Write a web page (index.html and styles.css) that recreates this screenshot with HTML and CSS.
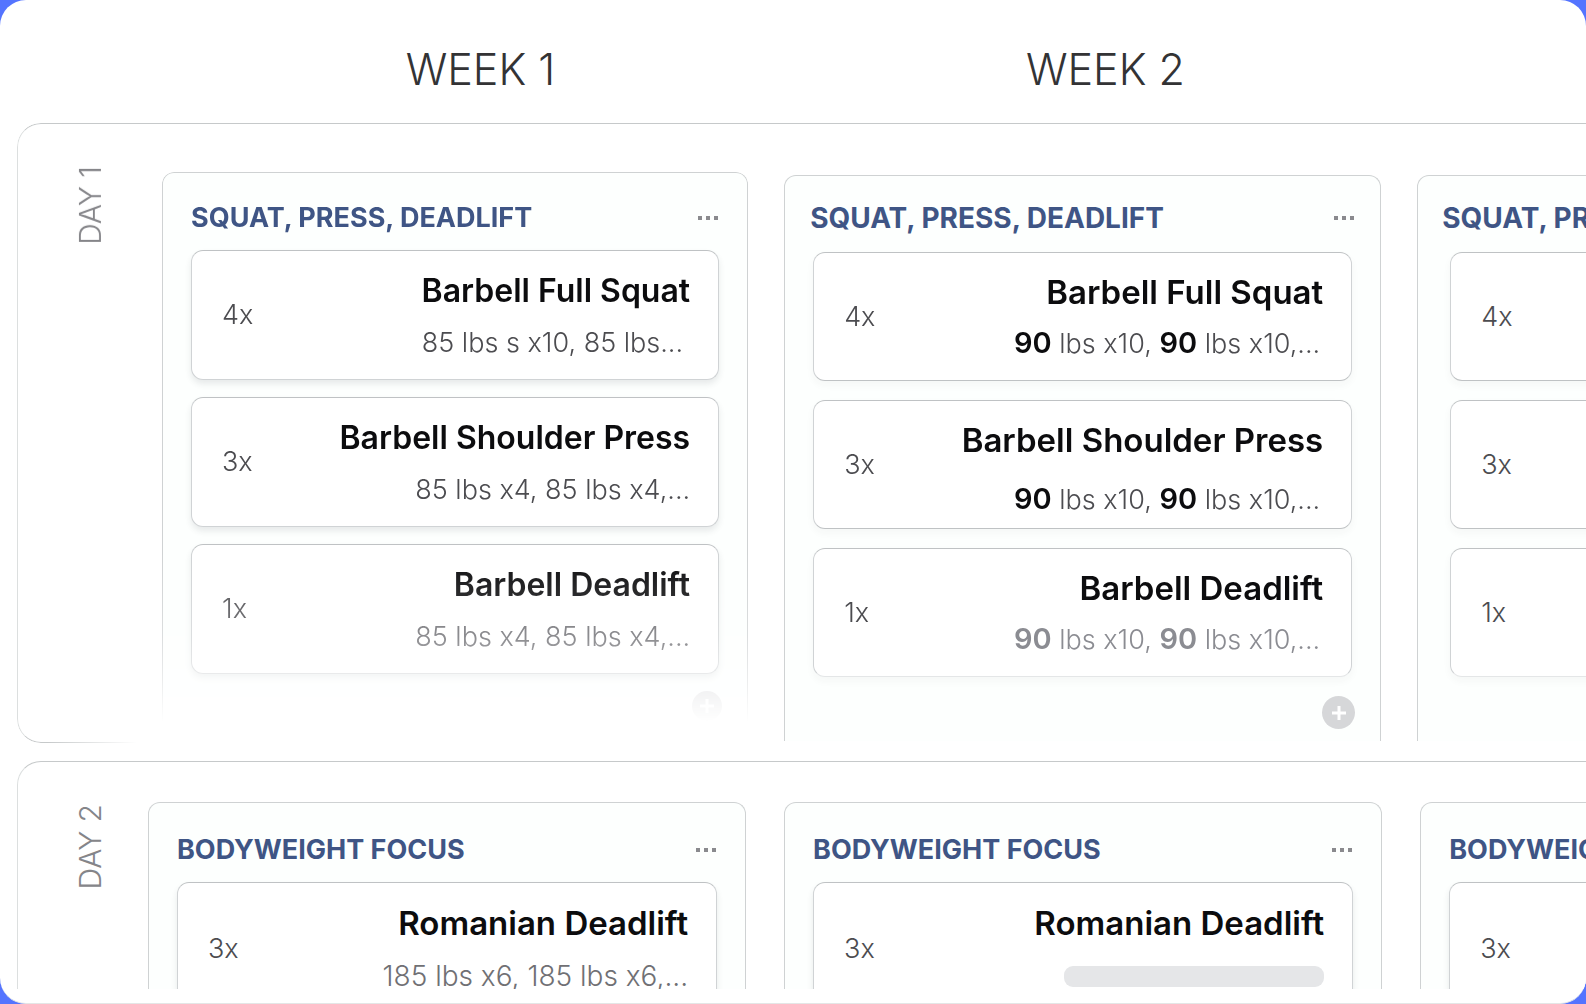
FILE: index.html
```html
<!DOCTYPE html>
<html lang="en">
<head>
  <meta charset="UTF-8" />
  <meta name="viewport" content="width=device-width, initial-scale=1.0" />
  <title>Training plan</title>
  <link rel="stylesheet" href="styles.css">
</head>
<body>
  <main class="board">
    <header class="weeks">
      <h1>WEEK 1</h1>
      <h1>WEEK 2</h1>
    </header>

    <section class="day day-one">
      <h2 class="day-label">DAY 1</h2>
      <div class="columns">
        <div class="column fading">
          <div class="column-header">
            <h3>SQUAT, PRESS, DEADLIFT</h3>
            <button class="more" aria-label="More"><svg width="22" height="6" viewBox="0 0 22 6"><path d="M1 1h4v4h-4zM9 1h4v4h-4zM17 1h4v4h-4z"/></svg></button>
          </div>
          <article class="card">
            <span class="sets">4x</span>
            <div class="info"><h4>Barbell Full Squat</h4><p class="inset">85 lbs s x10, 85 lbs...</p></div>
          </article>
          <article class="card">
            <span class="sets">3x</span>
            <div class="info"><h4>Barbell Shoulder Press</h4><p>85 lbs x4, 85 lbs x4,...</p></div>
          </article>
          <article class="card last">
            <span class="sets">1x</span>
            <div class="info"><h4>Barbell Deadlift</h4><p>85 lbs x4, 85 lbs x4,...</p></div>
          </article>
          <button class="add" aria-label="Add exercise"><svg width="16" height="16" viewBox="0 0 16 16"><path d="M8 1v14M1 8h14"/></svg></button>
        </div>

        <div class="column progress">
          <div class="column-header">
            <h3>SQUAT, PRESS, DEADLIFT</h3>
            <button class="more" aria-label="More"><svg width="22" height="6" viewBox="0 0 22 6"><path d="M1 1h4v4h-4zM9 1h4v4h-4zM17 1h4v4h-4z"/></svg></button>
          </div>
          <article class="card">
            <span class="sets">4x</span>
            <div class="info"><h4>Barbell Full Squat</h4><p><b>90</b> lbs x10, <b>90</b> lbs x10,...</p></div>
          </article>
          <article class="card roomy">
            <span class="sets">3x</span>
            <div class="info"><h4>Barbell Shoulder Press</h4><p><b>90</b> lbs x10, <b>90</b> lbs x10,...</p></div>
          </article>
          <article class="card last">
            <span class="sets">1x</span>
            <div class="info"><h4>Barbell Deadlift</h4><p><b>90</b> lbs x10, <b>90</b> lbs x10,...</p></div>
          </article>
          <button class="add" aria-label="Add exercise"><svg width="16" height="16" viewBox="0 0 16 16"><path d="M8 1v14M1 8h14"/></svg></button>
        </div>

        <div class="column progress next">
          <div class="column-header">
            <h3>SQUAT, PRESS, DEADLIFT</h3>
          </div>
          <article class="card"><span class="sets">4x</span></article>
          <article class="card"><span class="sets">3x</span></article>
          <article class="card last"><span class="sets">1x</span></article>
        </div>
      </div>
    </section>

    <section class="day day-two">
      <h2 class="day-label">DAY 2</h2>
      <div class="columns">
        <div class="column">
          <div class="column-header">
            <h3>BODYWEIGHT FOCUS</h3>
            <button class="more" aria-label="More"><svg width="22" height="6" viewBox="0 0 22 6"><path d="M1 1h4v4h-4zM9 1h4v4h-4zM17 1h4v4h-4z"/></svg></button>
          </div>
          <article class="card">
            <span class="sets">3x</span>
            <div class="info"><h4>Romanian Deadlift</h4><p>185 lbs x6, 185 lbs x6,...</p></div>
          </article>
        </div>

        <div class="column">
          <div class="column-header">
            <h3>BODYWEIGHT FOCUS</h3>
            <button class="more" aria-label="More"><svg width="22" height="6" viewBox="0 0 22 6"><path d="M1 1h4v4h-4zM9 1h4v4h-4zM17 1h4v4h-4z"/></svg></button>
          </div>
          <article class="card">
            <span class="sets">3x</span>
            <div class="info"><h4>Romanian Deadlift</h4><div class="placeholder"></div></div>
          </article>
        </div>

        <div class="column next">
          <div class="column-header">
            <h3>BODYWEIGHT FOCUS</h3>
          </div>
          <article class="card"><span class="sets">3x</span></article>
        </div>
      </div>
    </section>
  </main>
</body>
</html>
```

FILE: styles.css
```css
* {
  box-sizing: border-box;
}
body {
  margin: 0;
  background: #5474ff;
  font-family: Inter, "Liberation Sans", sans-serif;
  color: #0c0c0e;
}
h1, h2, h3, h4, p {
  margin: 0;
}
button {
  padding: 0;
  border: none;
  background: none;
  cursor: pointer;
}
.board {
  display: flex;
  flex-direction: column;
  height: 100vh;
  padding: 0 0 14px 17px;
  overflow: hidden;
  background: #fff;
  border-bottom: 1px solid #e4e6e6;
  border-radius: 26px;
}

/* week headings */
.weeks {
  display: grid;
  grid-template-columns: 625fr 625fr 168fr;
  flex: none;
  height: 123px;
  padding: 44px 0 0 151px;
}
.weeks h1 {
  font-size: 43px;
  font-weight: 300;
  line-height: 50px;
  text-align: center;
  color: #333335;
}

/* day rows */
.day {
  display: flex;
  border: 1px solid #c6c9ca;
  border-left-color: #dcdfdf;
  border-right: none;
  border-radius: 24px 0 0 24px;
  overflow: hidden;
}
.day-one {
  flex: none;
  -webkit-mask: linear-gradient(#000, #000) top / 100% calc(100% - 2px) no-repeat, linear-gradient(to right, #000 30px, transparent 120px) bottom / 100% 2px no-repeat;
  mask: linear-gradient(#000, #000) top / 100% calc(100% - 2px) no-repeat, linear-gradient(to right, #000 30px, transparent 120px) bottom / 100% 2px no-repeat;
}
.day-two {
  flex: 1;
  min-height: 0;
  margin-top: 18px;
  border-bottom: none;
  border-bottom-left-radius: 0;
}
.day-label {
  flex: none;
  align-self: flex-start;
  width: 32px;
  margin: 42px 0 0 56px;
  writing-mode: vertical-rl;
  transform: rotate(180deg);
  font-size: 30px;
  font-weight: 300;
  line-height: 32px;
  color: #858589;
}
.columns {
  display: grid;
  flex: 1;
  min-width: 0;
}
.day-one .columns {
  grid-template-columns: minmax(0, 587fr) minmax(0, 598fr) minmax(0, 169fr);
  gap: 36px;
  margin-left: 56px;
  height: 618px;
}
.day-two .columns {
  grid-template-columns: minmax(0, 599fr) minmax(0, 599fr) minmax(0, 166fr);
  column-gap: 38px;
  margin-left: 42px;
  min-height: 300px;
}

/* workouts */
.column {
  display: flex;
  flex-direction: column;
  gap: 17px;
  padding: 28px 28px 0;
  background: #fdfffe;
  border: 1px solid #cfd2d3;
  border-bottom: none;
  border-radius: 12px 12px 0 0;
}
.day-one .column {
  margin-top: 51px;
}
.day-one .column.fading {
  margin-top: 48px;
  -webkit-mask-image: linear-gradient(#000 380px, rgba(0, 0, 0, 0.75) 465px, rgba(0, 0, 0, 0.4) 510px, transparent 550px);
  mask-image: linear-gradient(#000 380px, rgba(0, 0, 0, 0.75) 465px, rgba(0, 0, 0, 0.4) 510px, transparent 550px);
}
.column.progress {
  gap: 19px;
  padding-top: 25px;
}
.day-two .column {
  margin-top: 40px;
  padding-top: 30px;
}
.column.next {
  min-width: 590px;
}
.day-one .column.next {
  padding-left: 32px;
}
.column-header {
  display: flex;
  align-items: center;
  justify-content: space-between;
  height: 32px;
  padding-top: 2px;
}
.progress .column-header {
  margin: 0 -3px;
}
.day-one .next .column-header {
  margin-left: -8px;
}
.column-header h3 {
  font-size: 27px;
  font-weight: 700;
  line-height: 32px;
  white-space: nowrap;
  color: #3f5585;
}
.progress .column-header h3 {
  font-size: 28px;
}
.more {
  display: flex;
}
.more svg {
  fill: #8a8a8e;
}
.card {
  display: flex;
  flex: none;
  align-items: center;
  justify-content: space-between;
  height: 130px;
  padding: 0 28px 0 30px;
  background: #fff;
  border: 1px solid #d0d3d5;
  border-top-color: #bfc2c4;
  border-radius: 12px;
  box-shadow: 0 4px 6px rgba(40, 50, 60, 0.1);
}
.progress .card {
  height: 129px;
  border-bottom-color: #bfc2c4;
  box-shadow: 0 4px 8px rgba(40, 50, 60, 0.04);
}
.sets {
  font-size: 27px;
  font-weight: 300;
  line-height: 32px;
  color: #4c4c50;
}
.day-two .sets {
  padding-top: 4px;
}
.info {
  align-self: flex-start;
  padding-top: 20px;
  text-align: right;
  white-space: nowrap;
}
.info h4 {
  font-size: 32px;
  font-weight: 600;
  line-height: 40px;
}
.progress h4,
.day-two h4 {
  font-size: 33px;
}
.info p {
  margin-top: 12px;
  font-size: 27px;
  font-weight: 300;
  line-height: 40px;
  color: #4c4c50;
}
.info .inset {
  padding-right: 7px;
}
.progress .info {
  padding-top: 19px;
}
.progress .info p {
  margin-top: 11px;
  padding-right: 3px;
}
.progress.column .roomy p {
  margin-top: 19px;
}
.info b {
  font-size: 29px;
  font-weight: 600;
  color: #0c0c0e;
}
.day-two .info p {
  margin-top: 13px;
  font-size: 28px;
  color: #707074;
}
.last .info p,
.last .info b {
  color: #8b8c92;
}
.fading .last .info p {
  color: #66666b;
}
.progress .last {
  border-bottom-color: #e4e6e7;
}
.placeholder {
  width: 260px;
  height: 21px;
  margin: 23px 0 0 auto;
  background: #e5e6e8;
  border-radius: 9px;
}
.add {
  display: flex;
  align-items: center;
  justify-content: center;
  align-self: flex-end;
  width: 33px;
  height: 33px;
  margin-right: -3px;
  background: #d6d7d9;
  border-radius: 50%;
}
.fading .add {
  width: 30px;
  height: 30px;
}
.add svg {
  fill: none;
  stroke: #fff;
  stroke-width: 3;
}
```
